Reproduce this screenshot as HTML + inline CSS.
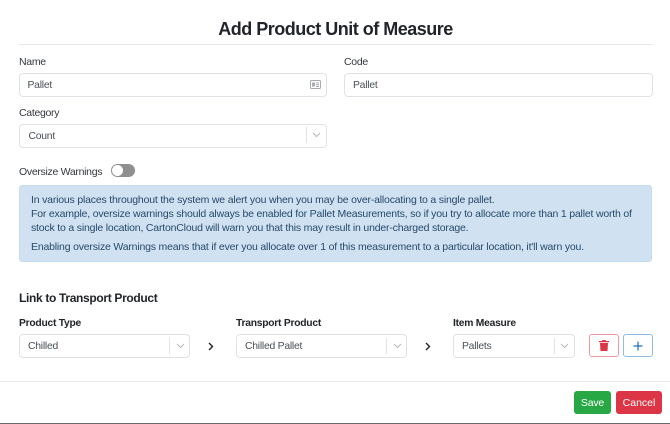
<!DOCTYPE html>
<html><head><meta charset="utf-8"><style>
html,body{margin:0;padding:0;background:#fff}
#p{position:relative;width:670px;height:424px;overflow:hidden;background:#fff;font-family:"Liberation Sans",sans-serif;color:#212529;filter:blur(.3px)}
#p>*{position:absolute;box-sizing:border-box;white-space:nowrap}
.t{font-size:10.500px;line-height:14px;color:#33383d;letter-spacing:-.3px}
.b{font-weight:700;font-size:10.300px;line-height:14px;color:#212529;letter-spacing:-.25px}
.box{border:1px solid #dfe2e6;border-radius:4px;background:#fff;height:24px;font-size:10.400px;line-height:24px;color:#495057;padding-left:8px;letter-spacing:-.25px}
.sep{width:1px;background:#dfe2e6;height:16px}
.a{font-size:10.500px;line-height:14px;color:#27496a;letter-spacing:-.19px}
</style></head><body><div id="p">
<div style="left:1px;right:0;top:17px;text-align:center;font-size:18px;font-weight:700;line-height:24px;color:#212529;letter-spacing:-.5px">Add Product Unit of Measure</div>
<div style="left:19px;top:44px;width:633px;height:1px;background:#e4e6e9"></div>
<div class="t" style="left:19px;top:55px">Name</div>
<div class="box" style="left:19px;top:73px;width:308px;padding-left:7.500px">Pallet</div>
<svg style="left:310px;top:80px" width="11" height="10" viewBox="0 0 11 10"><rect x=".5" y=".5" width="10" height="8" rx="1" fill="none" stroke="#a8acb0"/><rect x="2" y="2.500" width="3" height="4" fill="#a8acb0"/><path d="M6 3h3M6 4.800h3M6 6.500h3" stroke="#a8acb0"/></svg>
<div class="t" style="left:344px;top:55px">Code</div>
<div class="box" style="left:344px;top:73px;width:308.500px;padding-left:8px">Pallet</div>
<div class="t" style="left:19px;top:106px">Category</div>
<div class="box" style="left:19px;top:124px;width:308px;padding-left:8.500px">Count</div>
<div class="sep" style="left:306px;top:127px"></div>
<svg style="left:312px;top:132px" width="9" height="6" viewBox="0 0 9 6"><path d="M1 1l3.500 3.500L8 1" fill="none" stroke="#b5b8bb"/></svg>
<div class="t" style="left:19px;top:165px">Oversize Warnings</div>
<div style="left:111px;top:164px;width:24px;height:13px;border-radius:7px;background:#8f8f8f"></div>
<div style="left:112px;top:165px;width:11px;height:11px;border-radius:50%;background:#fff"></div>
<div style="left:19px;top:185px;width:633px;height:76.500px;background:#d0e2f2;border:1px solid #c6dcef;border-radius:3px"></div>
<div class="a" style="left:31px;top:193px">In various places throughout the system we alert you when you may be over-allocating to a single pallet.</div>
<div class="a" style="left:31px;top:207px">For example, oversize warnings should always be enabled for Pallet Measurements, so if you try to allocate more than 1 pallet worth of</div>
<div class="a" style="left:31px;top:221px">stock to a single location, CartonCloud will warn you that this may result in under-charged storage.</div>
<div class="a" style="left:31px;top:240px">Enabling oversize Warnings means that if ever you allocate over 1 of this measurement to a particular location, it'll warn you.</div>
<div style="left:19px;top:290px;font-size:12px;font-weight:700;line-height:16px;color:#212529;letter-spacing:-.33px">Link to Transport Product</div>
<div class="b" style="left:19px;top:317px">Product Type</div>
<div class="b" style="left:236px;top:317px">Transport Product</div>
<div class="b" style="left:453px;top:317px">Item Measure</div>
<div class="box" style="left:19px;top:334px;width:171px">Chilled</div>
<div class="sep" style="left:169px;top:338px"></div>
<svg style="left:176px;top:343px" width="9" height="6" viewBox="0 0 9 6"><path d="M1 1l3.500 3.500L8 1" fill="none" stroke="#b5b8bb"/></svg>
<div class="box" style="left:236px;top:334px;width:171px">Chilled Pallet</div>
<div class="sep" style="left:386px;top:338px"></div>
<svg style="left:393px;top:343px" width="9" height="6" viewBox="0 0 9 6"><path d="M1 1l3.500 3.500L8 1" fill="none" stroke="#b5b8bb"/></svg>
<div class="box" style="left:453px;top:334px;width:122px">Pallets</div>
<div class="sep" style="left:554px;top:338px"></div>
<svg style="left:560px;top:343px" width="9" height="6" viewBox="0 0 9 6"><path d="M1 1l3.500 3.500L8 1" fill="none" stroke="#b5b8bb"/></svg>
<svg style="left:208px;top:342px" width="6" height="9" viewBox="0 0 6 9"><path d="M1 1l3.500 3.500L1 8" fill="none" stroke="#212529" stroke-width="1.400"/></svg>
<svg style="left:425px;top:342px" width="6" height="9" viewBox="0 0 6 9"><path d="M1 1l3.500 3.500L1 8" fill="none" stroke="#212529" stroke-width="1.400"/></svg>
<div style="left:589px;top:334px;width:29.500px;height:23px;border:1px solid #ea9aa3;border-radius:3px"></div>
<svg style="left:599px;top:340px" width="10" height="11" viewBox="0 0 10 11"><path d="M3.500 0h3l.5 1h3v1.200H0V1h3zM1 3h8l-.5 8h-7z" fill="#dc3545"/></svg>
<div style="left:623px;top:334px;width:29.500px;height:23px;border:1px solid #8fbce6;border-radius:3px"></div>
<svg style="left:633px;top:341px" width="10" height="10" viewBox="0 0 10 10"><path d="M5 .5v9M.5 5h9" stroke="#1a6fc0" stroke-width="1.200"/></svg>
<div style="left:0;top:381px;width:670px;height:1px;background:#e6e8ea"></div>
<div style="left:574px;top:391px;width:37px;height:23px;background:#28a745;border-radius:3px;color:#fff;font-size:10.500px;line-height:24px;text-align:center;letter-spacing:-.2px">Save</div>
<div style="left:616px;top:391px;width:46px;height:23px;background:#dc3545;border-radius:3px;color:#fff;font-size:10.500px;line-height:24px;text-align:center">Cancel</div>
<div style="left:0;top:423px;width:670px;height:1px;background:#6b6b6b"></div>
</div></body></html>
